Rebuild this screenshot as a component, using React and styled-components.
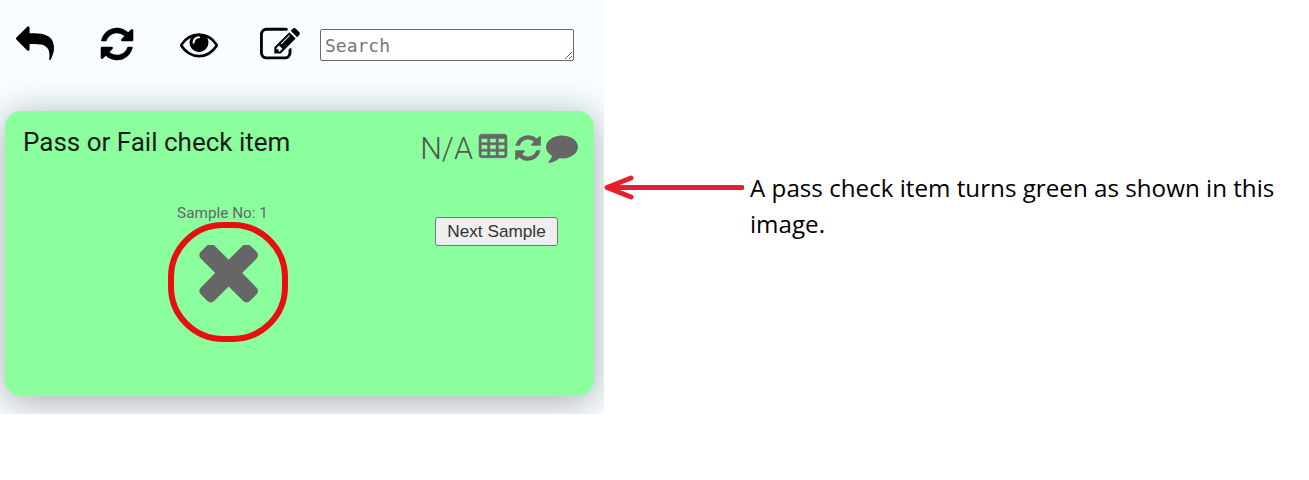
import React from "react";
import styled, { createGlobalStyle } from "styled-components";

const ICONS = {
  reply:
    "M1792 1120q0 166-127 451-3 7-10.500 24t-13.500 30-13 22q-12 17-28 17-15 0-23.500-10t-8.500-25q0-9 2.500-26.500t2.500-23.500q5-68 5-123 0-101-17.500-181t-48.500-138.500-80-101-105.500-69.500-133-42.500-154-21.500-175.500-6h-224v256q0 26-19 45t-45 19-45-19l-512-512q-19-19-19-45t19-45l512-512q19-19 45-19t45 19 19 45v256h224q713 0 875 403 53 134 53 333z",
  refresh:
    "M1639 1056q0 5-1 7-64 268-268 434.500t-478 166.500q-146 0-282.500-55t-243.500-157l-129 129q-19 19-45 19t-45-19-19-45v-448q0-26 19-45t45-19h448q26 0 45 19t19 45-19 45l-137 137q71 66 161 102t187 36q134 0 250-65t186-179q11-17 53-117 8-23 30-23h192q13 0 22.500 9.500t9.500 22.500zm25-800v448q0 26-19 45t-45 19h-448q-26 0-45-19t-19-45 19-45l138-138q-148-137-349-137-134 0-250 65t-186 179q-11 17-53 117-8 23-30 23h-199q-13 0-22.500-9.500t-9.500-22.500v-7q65-268 270-434.500t480-166.500q146 0 284 55.500t245 156.500l130-129q19-19 45-19t45 19 19 45z",
  eye:
    "M1664 960q-152-236-381-353 61 104 61 225 0 185-131.500 316.500t-316.500 131.500-316.500-131.500-131.500-316.500q0-121 61-225-229 117-381 353 133 205 333.500 326.500t434.500 121.500 434.500-121.500 333.500-326.500zm-720-384q0-20-14-34t-34-14q-125 0-214.500 89.500t-89.500 214.500q0 20 14 34t34 14 34-14 14-34q0-86 61-147t147-61q20 0 34-14t14-34zm848 384q0 34-20 69-140 230-376.500 368.500t-499.500 138.500-499.500-139-376.500-368q-20-35-20-69t20-69q140-229 376.500-368t499.500-139 499.500 139 376.500 368q20 35 20 69z",
  edit:
    "M888 1184l116-116-152-152-116 116v56h96v96h56zm440-720q-16-16-33 1l-350 350q-17 17-1 33t33-1l350-350q17-17 1-33zm80 594v190q0 119-84.500 203.500t-203.500 84.500h-832q-119 0-203.500-84.500t-84.500-203.500v-832q0-119 84.500-203.500t203.500-84.500h832q63 0 117 25 15 7 18 23 3 17-9 29l-49 49q-14 14-32 8-23-6-45-6h-832q-66 0-113 47t-47 113v832q0 66 47 113t113 47h832q66 0 113-47t47-113v-126q0-13 9-22l64-64q15-15 35-7t20 29zm-96-738l288 288-672 672h-288v-288zm444 132l-92 92-288-288 92-92q28-28 68-28t68 28l152 152q28 28 28 68t-28 68z",
  table:
    "M576 1376v-192q0-14-9-23t-23-9h-320q-14 0-23 9t-9 23v192q0 14 9 23t23 9h320q14 0 23-9t9-23zm0-384v-192q0-14-9-23t-23-9h-320q-14 0-23 9t-9 23v192q0 14 9 23t23 9h320q14 0 23-9t9-23zm512 384v-192q0-14-9-23t-23-9h-320q-14 0-23 9t-9 23v192q0 14 9 23t23 9h320q14 0 23-9t9-23zm-512-768v-192q0-14-9-23t-23-9h-320q-14 0-23 9t-9 23v192q0 14 9 23t23 9h320q14 0 23-9t9-23zm512 384v-192q0-14-9-23t-23-9h-320q-14 0-23 9t-9 23v192q0 14 9 23t23 9h320q14 0 23-9t9-23zm512 384v-192q0-14-9-23t-23-9h-320q-14 0-23 9t-9 23v192q0 14 9 23t23 9h320q14 0 23-9t9-23zm-512-768v-192q0-14-9-23t-23-9h-320q-14 0-23 9t-9 23v192q0 14 9 23t23 9h320q14 0 23-9t9-23zm512 384v-192q0-14-9-23t-23-9h-320q-14 0-23 9t-9 23v192q0 14 9 23t23 9h320q14 0 23-9t9-23zm0-384v-192q0-14-9-23t-23-9h-320q-14 0-23 9t-9 23v192q0 14 9 23t23 9h320q14 0 23-9t9-23zm128-320v1088q0 66-47 113t-113 47h-1344q-66 0-113-47t-47-113v-1088q0-66 47-113t113-47h1344q66 0 113 47t47 113z",
  comment:
    "M1792 896q0 174-120 321.500t-326 233-450 85.500q-70 0-145-8-198 175-460 242-49 14-114 22-17 2-30.500-9t-17.500-29v-1q-3-4-.5-12t2-10 4.500-9.500l6-9 7-8.500 8-9q7-8 31-34.500t34.500-38 31-39.500 32.500-51 27-59 26-76q-157-89-247.500-220t-90.500-281q0-130 71-248.500t191-204.500 286-136.500 348-50.500q244 0 450 85.500t326 233 120 321.500z",
  times:
    "M1298 1214q0 40-28 68l-136 136q-28 28-68 28t-68-28l-294-294-294 294q-28 28-68 28t-68-28l-136-136q-28-28-28-68t28-68l294-294-294-294q-28-28-28-68t28-68l136-136q28-28 68-28t68 28l294 294 294-294q28-28 68-28t68 28l136 136q28 28 28 68t-28 68l-294 294 294 294q28 28 28 68z",
};

const Icon = ({ name, size, box = "0 0 1792 1792", weight = 0 }) => (
  <svg width={size} height={size} viewBox={box} fill="currentColor">
    <path d={ICONS[name]} stroke="currentColor" strokeWidth={weight} />
  </svg>
);

const GlobalStyle = createGlobalStyle`
  html, body {
    margin: 0;
    padding: 0;
    background: #fff;
    font-family: "Roboto", sans-serif;
  }
`;

const App = () => {
  return (
    <Page>
      <GlobalStyle />
      <Panel>
        <Toolbar>
          <ToolIcon $gap={44}>
            <Icon name="reply" size={38} />
          </ToolIcon>
          <ToolIcon $gap={44}>
            <Icon name="refresh" size={38} />
          </ToolIcon>
          <ToolIcon $gap={42}>
            <Icon name="eye" size={38} />
          </ToolIcon>
          <ToolIcon $gap={20}>
            <Icon name="edit" size={40} />
          </ToolIcon>
          <Search placeholder="Search" />
        </Toolbar>
        <Card>
          <CardHeader>
            <Title>Pass or Fail check item</Title>
            <Actions>
              <NA>N/A</NA>
              <TableSlot>
                <Icon name="table" size={30} weight={36} />
              </TableSlot>
              <Icon name="refresh" size={30} />
              <CommentSlot>
                <Icon name="comment" size={32} />
              </CommentSlot>
            </Actions>
          </CardHeader>
          <CardBody>
            <Sample>
              <SampleLabel>Sample No: 1</SampleLabel>
              <Ring>
                <Icon name="times" size={59} box="104 283 1194 1194" />
              </Ring>
            </Sample>
            <NextButton>Next Sample</NextButton>
          </CardBody>
        </Card>
      </Panel>
      <Note>
        <Arrow width="140" height="28" viewBox="0 0 140 28">
          <path
            d="M138 14.5H4M27 5L3 14.5L27 24"
            fill="none"
            stroke="#e3202c"
            strokeWidth="5"
            strokeLinecap="round"
            strokeLinejoin="round"
          />
        </Arrow>
        <NoteText>A pass check item turns green as shown in this image.</NoteText>
      </Note>
    </Page>
  );
};

const Page = styled.div`
  display: flex;
  width: 1309px;
  height: 480px;
  overflow: hidden;
  background: #fff;
`;

const Panel = styled.div`
  width: 604px;
  height: 414px;
  flex: 0 0 auto;
  box-sizing: border-box;
  padding: 25px 10px 0 5px;
  overflow: hidden;
  background: #f8fdff;
`;

const Toolbar = styled.div`
  display: flex;
  align-items: flex-start;
  height: 86px;
  padding-left: 11px;
`;

const ToolIcon = styled.div`
  margin-right: ${(p) => p.$gap}px;
  color: #000;
  display: flex;
`;

const Search = styled.textarea`
  width: 254px;
  height: 32px;
  box-sizing: border-box;
  padding: 4px 4px 2px;
  margin: 4px 0 0 0;
  border: 1px solid #6a6a6a;
  border-radius: 2px;
  background: #fff;
  font-family: "DejaVu Sans Mono", monospace;
  font-size: 18px;
  line-height: 24px;
  outline: none;

  &::placeholder {
    color: #757575;
  }
`;

const Card = styled.div`
  width: 589px;
  height: 285px;
  box-sizing: border-box;
  padding: 16px 16px 0 18px;
  background: #8bfe9d;
  border-radius: 16px;
  box-shadow: 0 5px 36px rgba(30, 40, 45, 0.38);
  color: #666;
`;

const CardHeader = styled.div`
  display: flex;
  justify-content: space-between;
  align-items: flex-start;
`;

const Title = styled.h2`
  margin: 0;
  font-size: 26px;
  font-weight: 400;
  line-height: 30px;
  color: #1a1a1a;
`;

const Actions = styled.div`
  display: flex;
  align-items: center;
  gap: 3px;
`;

const NA = styled.span`
  font-size: 30.5px;
  font-weight: 300;
  line-height: 40px;
  margin: 2px 2px 0 0;
  color: #555;
`;

const TableSlot = styled.div`
  display: flex;
  margin: -3px 2px 0 0;
`;

const CommentSlot = styled.div`
  display: flex;
  margin-top: -2px;
`;

const CardBody = styled.div`
  display: flex;
  align-items: flex-start;
  margin-top: 36px;
`;

const Sample = styled.div`
  display: flex;
  flex-direction: column;
  align-items: center;
  margin-left: 145px;
`;

const SampleLabel = styled.div`
  font-size: 15.3px;
  line-height: 16px;
  margin-right: 11px;
  color: #666;
`;

const Ring = styled.div`
  width: 120px;
  height: 120px;
  box-sizing: border-box;
  margin-top: 1px;
  padding-bottom: 16px;
  border: 6px solid #e80f0f;
  border-radius: 46%;
  display: flex;
  align-items: center;
  justify-content: center;
  color: #666;
`;

const NextButton = styled.button`
  margin: 12px 0 0 147px;
  width: 123px;
  height: 29px;
  padding: 0;
  font-family: "Liberation Sans", sans-serif;
  font-size: 17.2px;
  color: #333;
  background: #efefef;
  border: 1px solid #767676;
  border-radius: 3px;
`;

const Note = styled.div`
  display: flex;
  align-items: flex-start;
  padding-top: 173px;
  height: 100px;
`;

const Arrow = styled.svg`
  flex: 0 0 auto;
  margin-right: 6px;
`;

const NoteText = styled.p`
  margin: -3px 0 0 0;
  width: 540px;
  font-family: "Open Sans", sans-serif;
  font-size: 24.2px;
  line-height: 36px;
  color: #000;
`;

export default App;
